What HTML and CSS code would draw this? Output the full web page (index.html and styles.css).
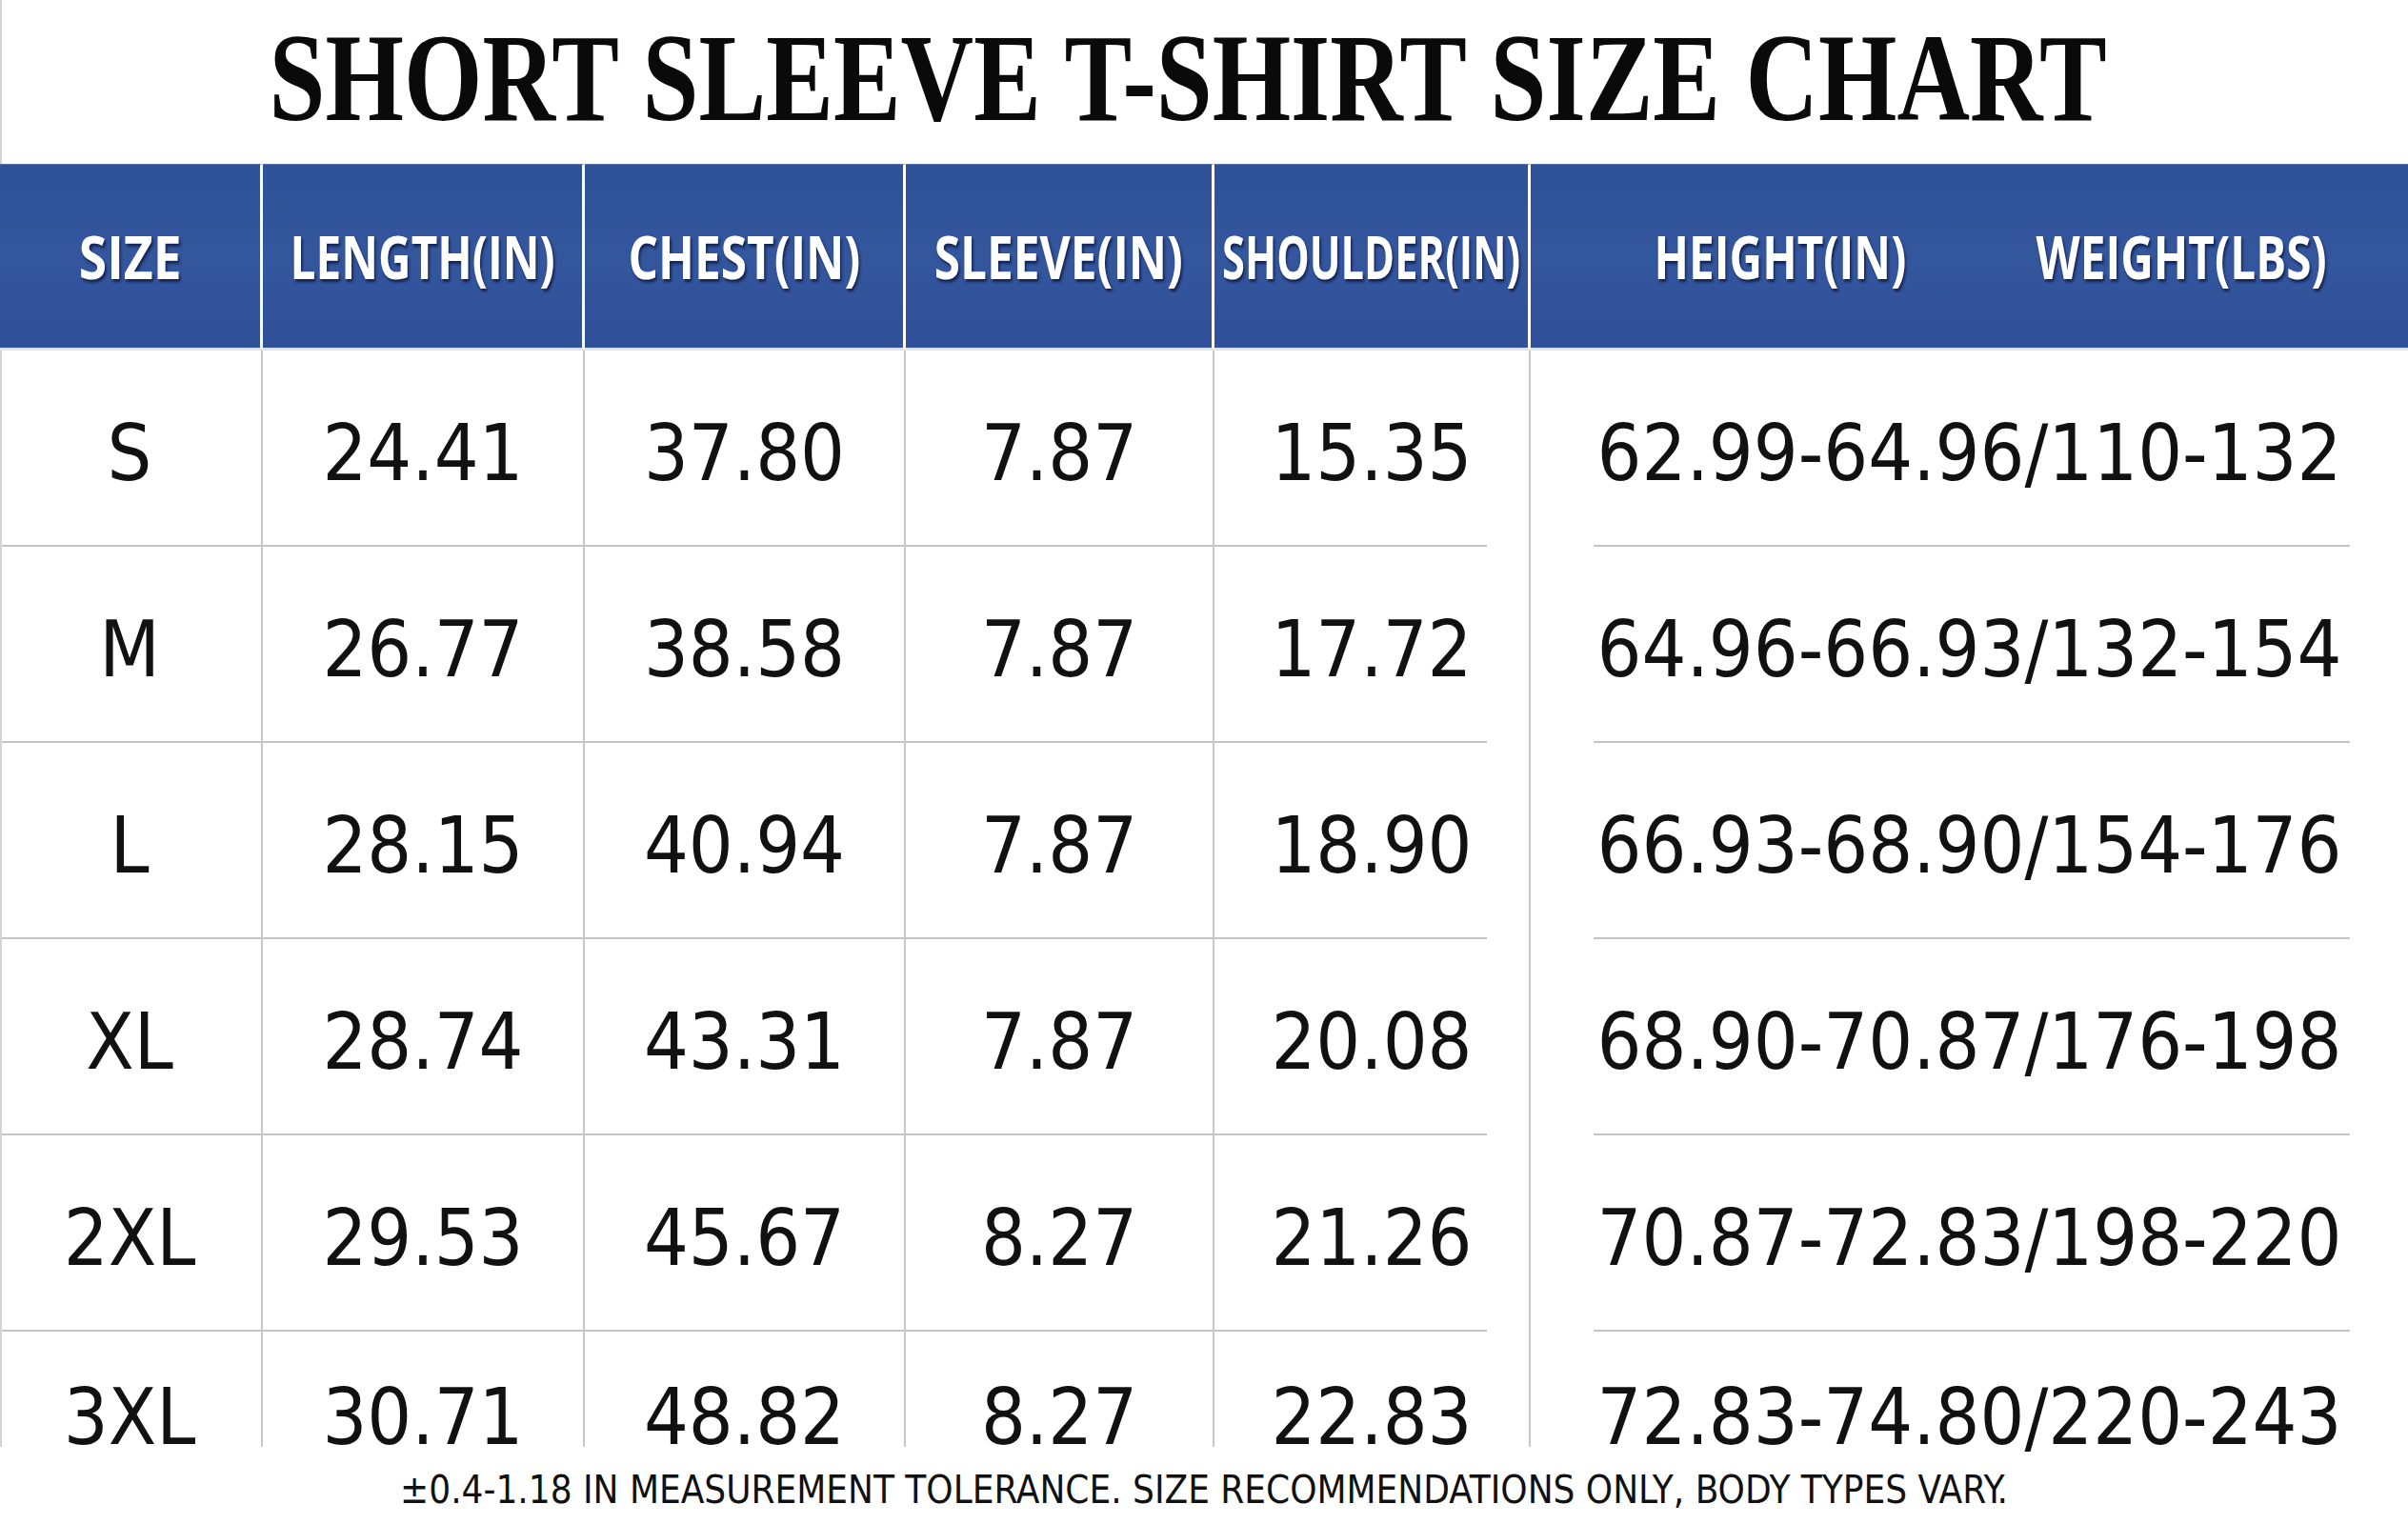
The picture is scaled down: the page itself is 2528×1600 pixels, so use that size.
FILE: index.html
```html
<!DOCTYPE html>
<html lang="en">
<head>
<meta charset="utf-8">
<title>Short Sleeve T-Shirt Size Chart</title>
<link rel="stylesheet" href="styles.css">
</head>
<body>
<div class="page">
  <h1 class="title"><span class="title-text">SHORT SLEEVE T-SHIRT SIZE CHART</span></h1>
  <div class="chart">
    <div class="hcell"><span class="lbl lbl-size">SIZE</span></div>
    <div class="hcell"><span class="lbl">LENGTH(IN)</span></div>
    <div class="hcell"><span class="lbl lbl-mid">CHEST(IN)</span></div>
    <div class="hcell"><span class="lbl lbl-mid">SLEEVE(IN)</span></div>
    <div class="hcell"><span class="lbl lbl-narrow">SHOULDER(IN)</span></div>
    <div class="hcell hw-head"><span class="lbl">HEIGHT(IN)</span><span class="lbl">WEIGHT(LBS)</span></div>

    <div class="cell first">S</div><div class="cell">24.41</div><div class="cell">37.80</div><div class="cell">7.87</div><div class="cell shoulder">15.35</div><div class="cell hw">62.99-64.96/110-132</div>
    <div class="cell first">M</div><div class="cell">26.77</div><div class="cell">38.58</div><div class="cell">7.87</div><div class="cell shoulder">17.72</div><div class="cell hw">64.96-66.93/132-154</div>
    <div class="cell first">L</div><div class="cell">28.15</div><div class="cell">40.94</div><div class="cell">7.87</div><div class="cell shoulder">18.90</div><div class="cell hw">66.93-68.90/154-176</div>
    <div class="cell first">XL</div><div class="cell">28.74</div><div class="cell">43.31</div><div class="cell">7.87</div><div class="cell shoulder">20.08</div><div class="cell hw">68.90-70.87/176-198</div>
    <div class="cell first">2XL</div><div class="cell">29.53</div><div class="cell">45.67</div><div class="cell">8.27</div><div class="cell shoulder">21.26</div><div class="cell hw">70.87-72.83/198-220</div>
    <div class="cell first last">3XL</div><div class="cell last">30.71</div><div class="cell last">48.82</div><div class="cell last">8.27</div><div class="cell shoulder last">22.83</div><div class="cell hw last">72.83-74.80/220-243</div>
  </div>
  <p class="note">±0.4-1.18 IN MEASUREMENT TOLERANCE. SIZE RECOMMENDATIONS ONLY, BODY TYPES VARY.</p>
</div>
</body>
</html>
```
FILE: styles.css
```css
* { box-sizing: border-box; }
html, body { margin: 0; padding: 0; background: #ffffff; }
.page {
  width: 2528px;
  height: 1600px;
  overflow: hidden;
  background: #ffffff;
}
.title {
  margin: 0;
  height: 172px;
  padding-top: 16px;
  padding-right: 36px;
  text-align: center;
  font-family: "Liberation Serif", "Times New Roman", serif;
  font-weight: 700;
  font-size: 132px;
  line-height: 131px;
  color: #0a0a0a;
  border-left: 2px solid #d4d4d4;
}
.title-text {
  display: inline-block;
  transform: scaleX(0.803);
  transform-origin: center;
  white-space: nowrap;
}
.chart {
  display: grid;
  grid-template-columns: 276px 338px 337px 324px 332px 921px;
  grid-template-rows: 196px repeat(5, 206px) 121px;
}
.hcell {
  background: linear-gradient(180deg, #2f5199 0%, #34569d 50%, #30519a 100%);
  border-right: 3px solid #ffffff;
  border-top: 1px solid #5a74ad;
  border-bottom: 3px solid #e2e2e2;
  display: flex;
  align-items: center;
  justify-content: center;
}
.hcell:nth-child(6) { border-right: none; }
.lbl {
  display: inline-block;
  font-family: "Open Sans", "DejaVu Sans", sans-serif;
  font-weight: 700;
  font-size: 62px;
  color: #ffffff;
  white-space: nowrap;
  transform: scaleX(0.77);
  text-shadow: 2px 3px 3px rgba(10, 20, 60, 0.75);
}
.lbl-size { transform: scaleX(0.86); }
.lbl-mid { transform: scaleX(0.8); }
.lbl-narrow { transform: scaleX(0.7); }
.hw-head {
  display: grid;
  grid-template-columns: 1fr 1fr;
  padding-left: 52px;
  padding-right: 28px;
  justify-items: center;
}
.cell {
  display: flex;
  justify-content: center;
  align-items: flex-start;
  padding-top: 60px;
  font-family: "DejaVu Sans Condensed", "DejaVu Sans", sans-serif;
  font-stretch: semi-condensed;
  font-size: 82px;
  color: #111111;
  white-space: nowrap;
  border-right: 2px solid #c8c8c8;
  background: linear-gradient(#c4c4c4, #c4c4c4) left bottom / 100% 2px no-repeat;
}
.cell.first { border-left: 2px solid #d4d4d4; padding-right: 4px; }
.cell.shoulder {
  background: linear-gradient(#c4c4c4, #c4c4c4) left bottom / 286px 2px no-repeat;
}
.cell.hw {
  border-right: none;
  background: linear-gradient(#c4c4c4, #c4c4c4) 66px bottom / 794px 2px no-repeat;
}
.cell.last {
  padding-top: 42px;
  background: none;
}
.note {
  margin: 22px 0 0;
  text-align: center;
  font-family: "DejaVu Sans Condensed", "DejaVu Sans", sans-serif;
  font-stretch: semi-condensed;
  font-size: 40px;
  color: #111111;
  white-space: nowrap;
}
```
